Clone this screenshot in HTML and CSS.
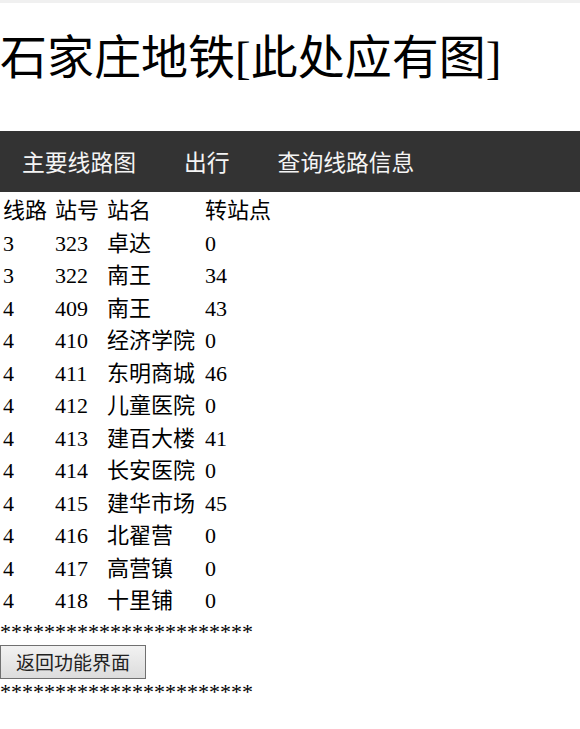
FILE: index.html
```html
<!DOCTYPE html>
<html lang="zh-CN">
<head>
<meta charset="utf-8">
<title>石家庄地铁</title>
<link rel="stylesheet" href="styles.css">
</head>
<body>
<div class="topstrip"></div>
<h1 class="title">石家庄地铁[此处应有图]</h1>
<nav class="nav">
  <ul class="nav-list">
    <li><a class="nav-link" href="#">主要线路图</a></li>
    <li><a class="nav-link" href="#">出行</a></li>
    <li><a class="nav-link" href="#">查询线路信息</a></li>
  </ul>
</nav>
<table class="stations">
  <tr><td>线路</td><td>站号</td><td class="name">站名</td><td>转站点</td></tr>
  <tr><td>3</td><td>323</td><td class="name">卓达</td><td>0</td></tr>
  <tr><td>3</td><td>322</td><td class="name">南王</td><td>34</td></tr>
  <tr><td>4</td><td>409</td><td class="name">南王</td><td>43</td></tr>
  <tr><td>4</td><td>410</td><td class="name">经济学院</td><td>0</td></tr>
  <tr><td>4</td><td>411</td><td class="name">东明商城</td><td>46</td></tr>
  <tr><td>4</td><td>412</td><td class="name">儿童医院</td><td>0</td></tr>
  <tr><td>4</td><td>413</td><td class="name">建百大楼</td><td>41</td></tr>
  <tr><td>4</td><td>414</td><td class="name">长安医院</td><td>0</td></tr>
  <tr><td>4</td><td>415</td><td class="name">建华市场</td><td>45</td></tr>
  <tr><td>4</td><td>416</td><td class="name">北翟营</td><td>0</td></tr>
  <tr><td>4</td><td>417</td><td class="name">高营镇</td><td>0</td></tr>
  <tr><td>4</td><td>418</td><td class="name">十里铺</td><td>0</td></tr>
</table>
<div class="footer">
  <div class="stars">***********************</div>
  <button class="back-btn" type="button">返回功能界面</button>
  <div class="stars">***********************</div>
</div>
</body>
</html>
```
FILE: styles.css
```css
html, body {
  margin: 0;
  padding: 0;
  background: #ffffff;
}
body {
  font-family: "Liberation Serif", "Noto Sans CJK SC", serif;
  color: #000;
}
.topstrip {
  height: 3px;
  background: #f0f0f0;
}
.title {
  margin: 25px 0 43px;
  font-size: 47px;
  line-height: 60px;
  font-weight: normal;
  font-family: "Liberation Serif", "Noto Sans CJK SC", serif;
}
.nav {
  background: #333333;
}
.nav-list {
  list-style: none;
  margin: 0;
  padding: 0;
  display: flex;
}
.nav-link {
  display: block;
  padding: 0 24px;
  line-height: 61px;
  font-size: 22.8px;
  color: #f4f4f4;
  text-decoration: none;
  font-family: "Noto Sans CJK SC", sans-serif;
}
.nav-list li:first-child .nav-link {
  padding-left: 22px;
}
.stations {
  margin-top: 2px;
  border-spacing: 2px;
  font-size: 22px;
  line-height: 28.5px;
}
.stations td {
  padding: 1px 5px 1px 1px;
  white-space: nowrap;
}
.stations td.name {
  padding-right: 7px;
}
.footer {
  font-size: 22px;
}
.stars {
  line-height: 25px;
}
.back-btn {
  display: block;
  margin: 1px 0 0;
  width: 146px;
  height: 34px;
  padding: 0;
  font-size: 19px;
  font-family: "Noto Sans CJK SC", sans-serif;
  color: #222;
  background: linear-gradient(#f2f2f2, #dcdcdc);
  border: 1px solid #707070;
  border-radius: 0;
}
```
